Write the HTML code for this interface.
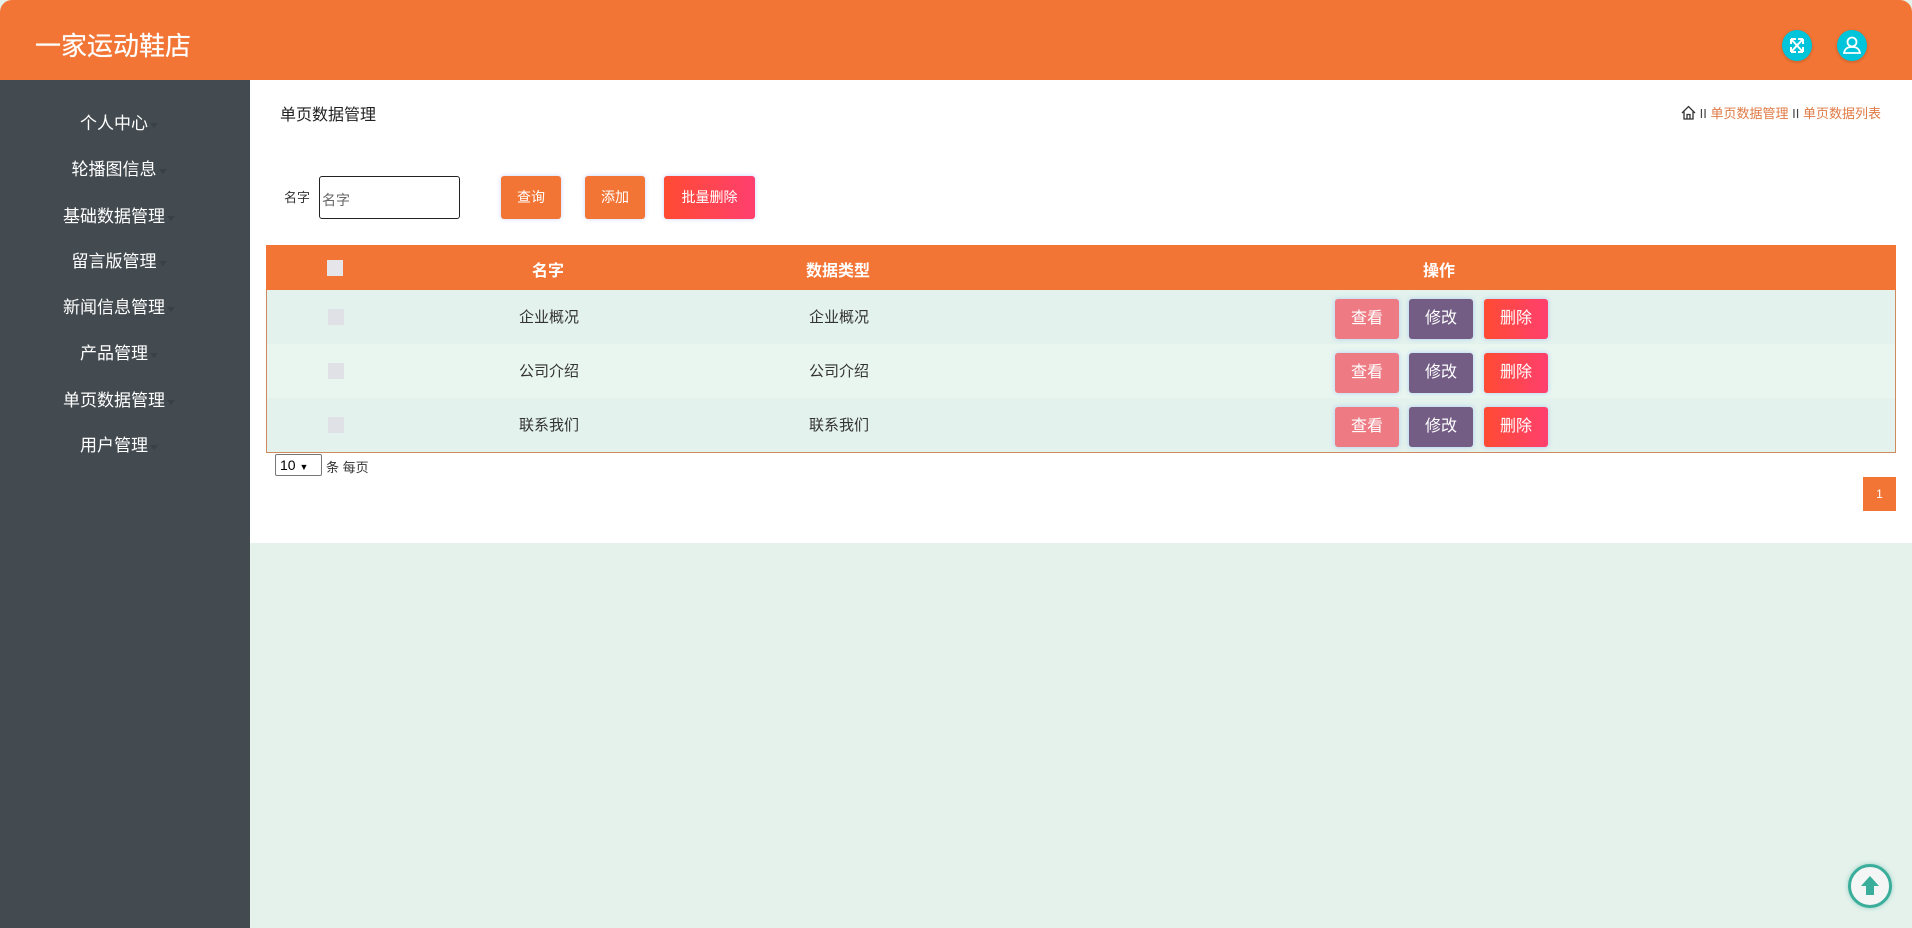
<!DOCTYPE html>
<html><head><meta charset="utf-8">
<style>
*{margin:0;padding:0;box-sizing:border-box}
body{width:1912px;height:928px;overflow:hidden;background:#e5f2ec;font-family:"Liberation Sans","Noto Sans CJK SC",sans-serif;position:relative}
.hdr{position:absolute;left:0;top:0;width:1912px;height:80px;background:#f27535;border-radius:12px 12px 0 0}
.hdr .t{position:absolute;left:35px;top:31px;font-size:26px;color:#fff;line-height:30px;text-shadow:0 0 0.6px #fff}
.ic{position:absolute;top:30px;width:30px;height:31px;border-radius:50%;background:#00c4d9;box-shadow:0 1px 3px rgba(0,0,0,.2)}
.side{position:absolute;left:0;top:80px;width:250px;height:848px;background:#434b50}
.side div{position:absolute;left:-6px;width:250px;text-align:center;color:#fff;font-size:17px;line-height:22px}
.side div:after{content:"";display:inline-block;border:4.5px solid transparent;border-top:5px solid #3a4146;margin-left:2px;vertical-align:-3px}
.main{position:absolute;left:250px;top:80px;width:1662px;height:463px;background:#fff}
.ttl{position:absolute;left:280px;top:101px;font-size:16px;color:#222}
.bc{position:absolute;left:1681px;top:103px;font-size:13px;color:#e07a45}
.bc span{color:#444}
.lbl{position:absolute;left:284px;top:187px;font-size:13px;color:#333}
.inp{position:absolute;left:319px;top:176px;width:141px;height:43px;border:1px solid #222;border-radius:3px;font-size:14px;color:#666;padding:13px 2px}
.btn{position:absolute;top:176px;height:43px;color:#fff;font-size:14px;text-align:center;line-height:43px;border-radius:3px;background:#f27535;box-shadow:0 0 5px rgba(120,150,255,.4)}
.tbl{position:absolute;left:266px;top:245px;width:1630px;height:208px;border:1px solid #cf8a5e;border-top:none}
.th{position:absolute;left:-1px;top:0;width:1630px;height:45px;background:#f27535;color:#fff;font-size:16px;font-weight:bold}
.row{position:absolute;left:0;width:1628px;height:54px;font-size:15px;color:#333}
.c{position:absolute;transform:translateX(-50%);white-space:nowrap}
.cb{position:absolute;left:61px;width:16px;height:16px;background:#dfe1e6}
.rb{position:absolute;top:9px;width:64px;height:40px;border-radius:3px;color:#fff;font-size:16px;text-align:center;line-height:40px;box-shadow:0 0 5px rgba(120,170,255,.5)}
</style></head><body>
<div class="hdr"><div class="t">一家运动鞋店</div>
<div class="ic" style="left:1782px"><svg width="30" height="31" viewBox="0 0 30 31" fill="none" stroke="#fff" stroke-width="2"><path d="M9 9l12 13M21 9L9 22M9 9h5M9 9v5M21 9h-5M21 9v5M9 22h5M9 22v-5M21 22h-5M21 22v-5"/></svg></div>
<div class="ic" style="left:1837px"><svg width="30" height="31" viewBox="0 0 30 31" fill="none" stroke="#fff" stroke-width="1.8"><circle cx="15" cy="12" r="4.5"/><path d="M7 23c1-5 4-6 8-6s7 1 8 6z"/></svg></div>
</div>
<div class="side">
<div style="top:33px">个人中心</div>
<div style="top:79px">轮播图信息</div>
<div style="top:126px">基础数据管理</div>
<div style="top:171px">留言版管理</div>
<div style="top:217px">新闻信息管理</div>
<div style="top:263px">产品管理</div>
<div style="top:310px">单页数据管理</div>
<div style="top:355px">用户管理</div>
</div>
<div class="main"></div>
<div class="ttl">单页数据管理</div>
<div class="bc"><svg width="15" height="15" viewBox="0 0 15 15" style="vertical-align:-2px" fill="none" stroke="#333" stroke-width="1.3"><path d="M1 8L7.5 1.5 14 8M3 6.5V14h9V6.5M6 14V9.5h3V14"/></svg> <span>II</span> 单页数据管理 <span>II</span> 单页数据列表</div>
<div class="lbl">名字</div>
<div class="inp">名字</div>
<div class="btn" style="left:501px;width:60px">查询</div>
<div class="btn" style="left:585px;width:60px">添加</div>
<div class="btn" style="left:664px;width:91px;background:linear-gradient(90deg,#ff4b33,#ff3f6e)">批量删除</div>
<div class="tbl">
<div class="th"><div class="cb" style="top:15px;background:#e6e6ea"></div>
<div class="c" style="left:282px;top:12px">名字</div><div class="c" style="left:572px;top:12px">数据类型</div><div class="c" style="left:1173px;top:12px">操作</div></div>
<div class="row" style="top:45px;background:#e3f2ec"><div class="cb" style="top:19px"></div><div class="c" style="left:282px;top:16px">企业概况</div><div class="c" style="left:572px;top:16px">企业概况</div>
<div class="rb" style="left:1068px;background:#ee7b83">查看</div><div class="rb" style="left:1142px;background:#735d84">修改</div><div class="rb" style="left:1217px;background:linear-gradient(90deg,#ff4b33,#ff3f6e)">删除</div></div>
<div class="row" style="top:99px;background:#e9f6f0"><div class="cb" style="top:19px"></div><div class="c" style="left:282px;top:16px">公司介绍</div><div class="c" style="left:572px;top:16px">公司介绍</div>
<div class="rb" style="left:1068px;background:#ee7b83">查看</div><div class="rb" style="left:1142px;background:#735d84">修改</div><div class="rb" style="left:1217px;background:linear-gradient(90deg,#ff4b33,#ff3f6e)">删除</div></div>
<div class="row" style="top:153px;background:#e3f2ec"><div class="cb" style="top:19px"></div><div class="c" style="left:282px;top:16px">联系我们</div><div class="c" style="left:572px;top:16px">联系我们</div>
<div class="rb" style="left:1068px;background:#ee7b83">查看</div><div class="rb" style="left:1142px;background:#735d84">修改</div><div class="rb" style="left:1217px;background:linear-gradient(90deg,#ff4b33,#ff3f6e)">删除</div></div>
</div>
<div style="position:absolute;left:275px;top:454px;width:47px;height:22px;border:1px solid #777;border-radius:2px;font-size:14px;line-height:20px;padding-left:4px;color:#000">10 <span style="font-size:9px">▼</span></div>
<div style="position:absolute;left:326px;top:457px;font-size:13px;color:#333">条 每页</div>
<div style="position:absolute;left:1863px;top:477px;width:33px;height:34px;background:#f27535;color:#fff;font-size:12px;text-align:center;line-height:34px">1</div>
<div style="position:absolute;left:1848px;top:864px;width:44px;height:44px;border-radius:50%;border:3px solid #3aae9a;background:#f4f6f6;box-shadow:0 0 5px rgba(58,174,154,.5)">
<svg width="38" height="38" viewBox="0 0 38 38"><path d="M19 9L10 19h5v9h8v-9h5z" fill="#3aae9a"/></svg></div>
</body></html>
